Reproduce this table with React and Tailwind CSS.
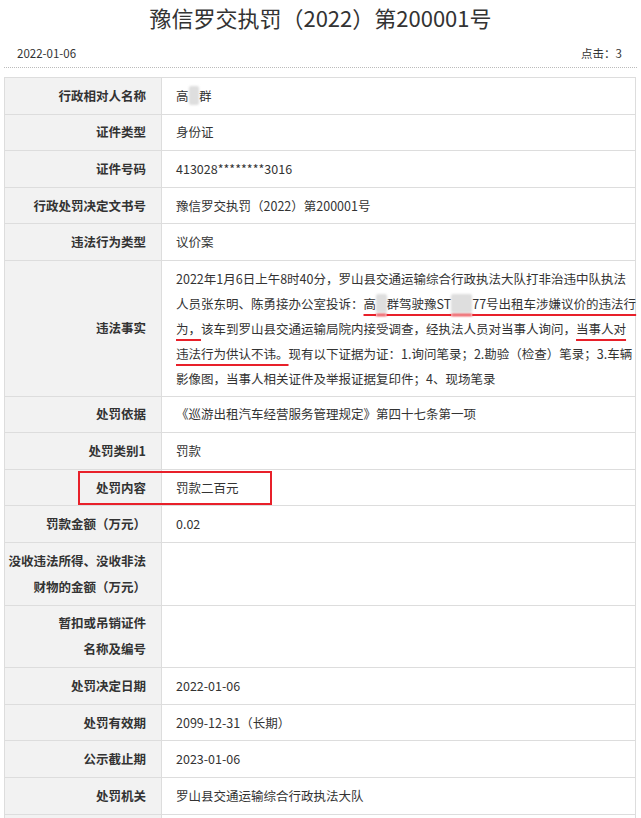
import React from 'react';

const RED_LINE = 'underline decoration-[#e8202a] decoration-2 underline-offset-[5px]';

// masked (blurred) characters in the source screenshot
function Blur({ n = 1 }) {
  return (
    <span className="bg-[#dedede] text-transparent blur-[1px] rounded-[2px] tracking-[-2px]">{'某'.repeat(n)}</span>
  );
}

const rows = [
  { label: '行政相对人名称', value: <>高<Blur />群</> },
  { label: '证件类型', value: '身份证' },
  { label: '证件号码', value: '413028********3016' },
  { label: '行政处罚决定文书号', value: '豫信罗交执罚（2022）第200001号' },
  { label: '违法行为类型', value: '议价案' },
  {
    label: '违法事实',
    fact: true,
    value: (
      <>
        <div className="whitespace-nowrap">2022年1月6日上午8时40分，罗山县交通运输综合行政执法大队打非治违中队执法</div>
        <div className="whitespace-nowrap">
          人员张东明、陈勇接办公室投诉：
          <span className={RED_LINE}>高<Blur />群驾驶豫ST<Blur n={2} />77号出租车涉嫌议价的违法行</span>
        </div>
        <div className="whitespace-nowrap">
          <span className={RED_LINE}>为，</span>该车到罗山县交通运输局院内接受调查，经执法人员对当事人询问，
          <span className={RED_LINE}>当事人对</span>
        </div>
        <div className="whitespace-nowrap">
          <span className={RED_LINE}>违法行为供认不讳。</span>现有以下证据为证：1.询问笔录；2.勘验（检查）笔录；3.车辆
        </div>
        <div className="whitespace-nowrap">影像图，当事人相关证件及举报证据复印件；4、现场笔录</div>
      </>
    ),
  },
  { label: '处罚依据', value: '《巡游出租汽车经营服务管理规定》第四十七条第一项' },
  { label: '处罚类别1', value: '罚款' },
  { label: '处罚内容', value: '罚款二百元' },
  { label: '罚款金额（万元）', value: '0.02' },
  { label: <>没收违法所得、没收非法<br />财物的金额（万元）</>, value: '' },
  { label: <>暂扣或吊销证件<br />名称及编号</>, value: '' },
  { label: '处罚决定日期', value: '2022-01-06' },
  { label: '处罚有效期', value: '2099-12-31（长期）' },
  { label: '公示截止期', value: '2023-01-06' },
  { label: '处罚机关', value: '罗山县交通运输综合行政执法大队' },
  { label: '', value: '' },
];

export default function App() {
  return (
    <div className="relative w-[641px] h-[818px] overflow-hidden bg-white text-[#333] font-['Noto_Sans_CJK_SC','Microsoft_YaHei',sans-serif]">
      <h1 className="text-center text-[22px] leading-[34px] font-normal text-[#333]">
        豫信罗交执罚（2022）第200001号
      </h1>

      <div className="mx-[4px] mt-[9px] flex items-center justify-between border-b border-dotted border-[#bbb] pl-[13px] pr-[15px] pb-[4px] text-[11.5px] leading-[20px]">
        <span>2022-01-06</span>
        <span>点击：3</span>
      </div>

      <table className="mx-[4px] mt-[9px] w-[632px] table-fixed border-collapse text-[12.5px]">
        <colgroup>
          <col className="w-[157px]" />
          <col />
        </colgroup>
        <tbody>
          {rows.map((row, i) => (
            <tr key={i}>
              <td className="border border-[#ddd] bg-[#f2f2f2] pl-0 pr-[15px] py-[4.8px] text-right font-bold leading-[26px] align-middle whitespace-nowrap">
                {row.label}
              </td>
              <td
                className={`border border-[#ddd] pl-[14px] pr-[4px] py-[4.8px] align-middle ${
                  row.fact ? 'leading-[25px]' : 'leading-[26px]'
                }`}
              >
                {row.value}
              </td>
            </tr>
          ))}
        </tbody>
      </table>

      <div className="absolute left-[78px] top-[471px] w-[194px] h-[34px] border-2 border-[#e8202a]" />
    </div>
  );
}
